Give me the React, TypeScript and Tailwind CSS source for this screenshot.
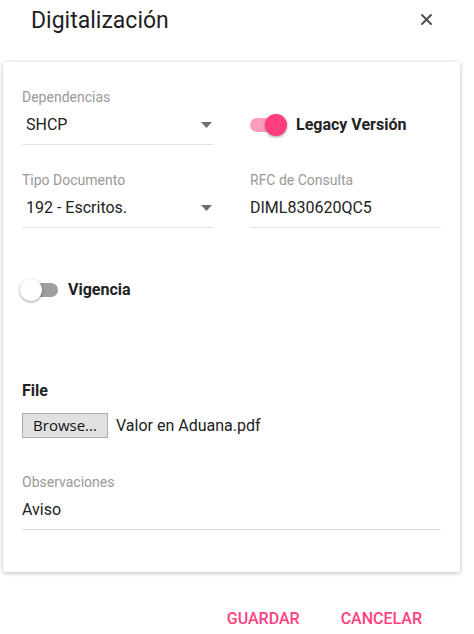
import * as React from "react"

const roboto = { fontFamily: "Roboto, 'Noto Sans', sans-serif" }

function Toggle({ on }: { on: boolean }) {
  return (
    <div
      className={
        "relative h-[14px] w-[36px] shrink-0 rounded-full " +
        (on ? "bg-[#ff9dbf]" : "bg-[#9e9e9e]")
      }
    >
      <div
        className={
          "absolute top-[-4px] h-[22px] w-[22px] rounded-full shadow-[0_1px_3px_rgba(0,0,0,0.4)] " +
          (on ? "left-[15px] bg-[#ff3d7f]" : "left-[-2px] bg-white")
        }
      />
    </div>
  )
}

function Caret() {
  return (
    <svg width="11" height="6" viewBox="0 0 11 6" className="mr-[1px] shrink-0">
      <path d="M0 0 L11 0 L5.5 6 Z" fill="#6f6f6f" />
    </svg>
  )
}

function Field({
  label,
  value,
  select,
  valuePad = "pl-[4px]",
}: {
  label: string
  value: string
  select?: boolean
  valuePad?: string
}) {
  return (
    <div className="flex flex-col border-b border-[#e0e0e0] pb-[7px]">
      <div className="h-5 text-[14px] leading-5 text-[#999]">{label}</div>
      <div className={"mt-[6px] flex h-6 items-center justify-between text-[16px] leading-6 text-[#222] " + valuePad}>
        <span>{value}</span>
        {select && <Caret />}
      </div>
    </div>
  )
}

export default function App() {
  return (
    <div className="h-[634px] w-[474px] bg-white" style={roboto}>
      {/* header */}
      <div className="flex h-[62px] items-start justify-between">
        <h1 className="ml-[31px] mt-[6px] text-[23px] leading-[30px] text-[#1f1f1f]">Digitalización</h1>
        <button className="mr-[42px] mt-[14px] p-0">
          <svg width="11" height="11" viewBox="0 0 11 11">
            <path d="M1 1 L10 10 M10 1 L1 10" stroke="#4a4a4a" strokeWidth="1.8" strokeLinecap="round" />
          </svg>
        </button>
      </div>

      {/* card */}
      <div className="ml-[3px] w-[457px] rounded-[2px] bg-white px-[19px] pt-[25px] pb-[42px] shadow-[0_1px_4px_rgba(0,0,0,0.28)]">
        <div className="grid grid-cols-2 gap-x-[37px] gap-y-[25px]">
          <Field label="Dependencias" value="SHCP" select />
          <div className="flex flex-col">
            <div className="h-5" />
            <div className="mt-[6px] flex h-6 items-center">
              <Toggle on />
              <span className="ml-[10px] text-[16px] font-bold text-[#222]">Legacy Versión</span>
            </div>
          </div>
          <Field label="Tipo Documento" value="192 - Escritos." select />
          <Field label="RFC de Consulta" value="DIML830620QC5" valuePad="pl-0" />
        </div>

        <div className="mt-[50px] flex h-6 items-center">
          <Toggle on={false} />
          <span className="ml-[10px] text-[16px] font-bold text-[#222]">Vigencia</span>
        </div>

        <div className="mt-[77px] text-[16px] font-bold leading-6 text-[#222]">File</div>
        <div className="mt-[10px] flex items-center">
          <button
            className="h-[25px] w-[86px] border border-[#adadad] bg-[#e1e1e1] text-[15px] leading-[23px] text-[#111]"
            style={{ fontFamily: "'Open Sans', sans-serif" }}
          >
            Browse...
          </button>
          <span className="ml-[8px] text-[16px] text-[#222]">Valor en Aduana.pdf</span>
        </div>

        <div className="mt-[34px] border-b border-[#e0e0e0] pb-[7px]">
          <div className="h-5 text-[14px] leading-5 text-[#999]">Observaciones</div>
          <div className="mt-[6px] h-6 text-[16px] leading-6 text-[#222]">Aviso</div>
        </div>
      </div>

      {/* actions */}
      <div className="mt-[35px] flex justify-end gap-[41px] pr-[52px]">
        <button className="text-[16px] font-medium leading-6 text-[#ff4081]">GUARDAR</button>
        <button className="text-[16px] font-medium leading-6 text-[#ff4081]">CANCELAR</button>
      </div>
    </div>
  )
}
